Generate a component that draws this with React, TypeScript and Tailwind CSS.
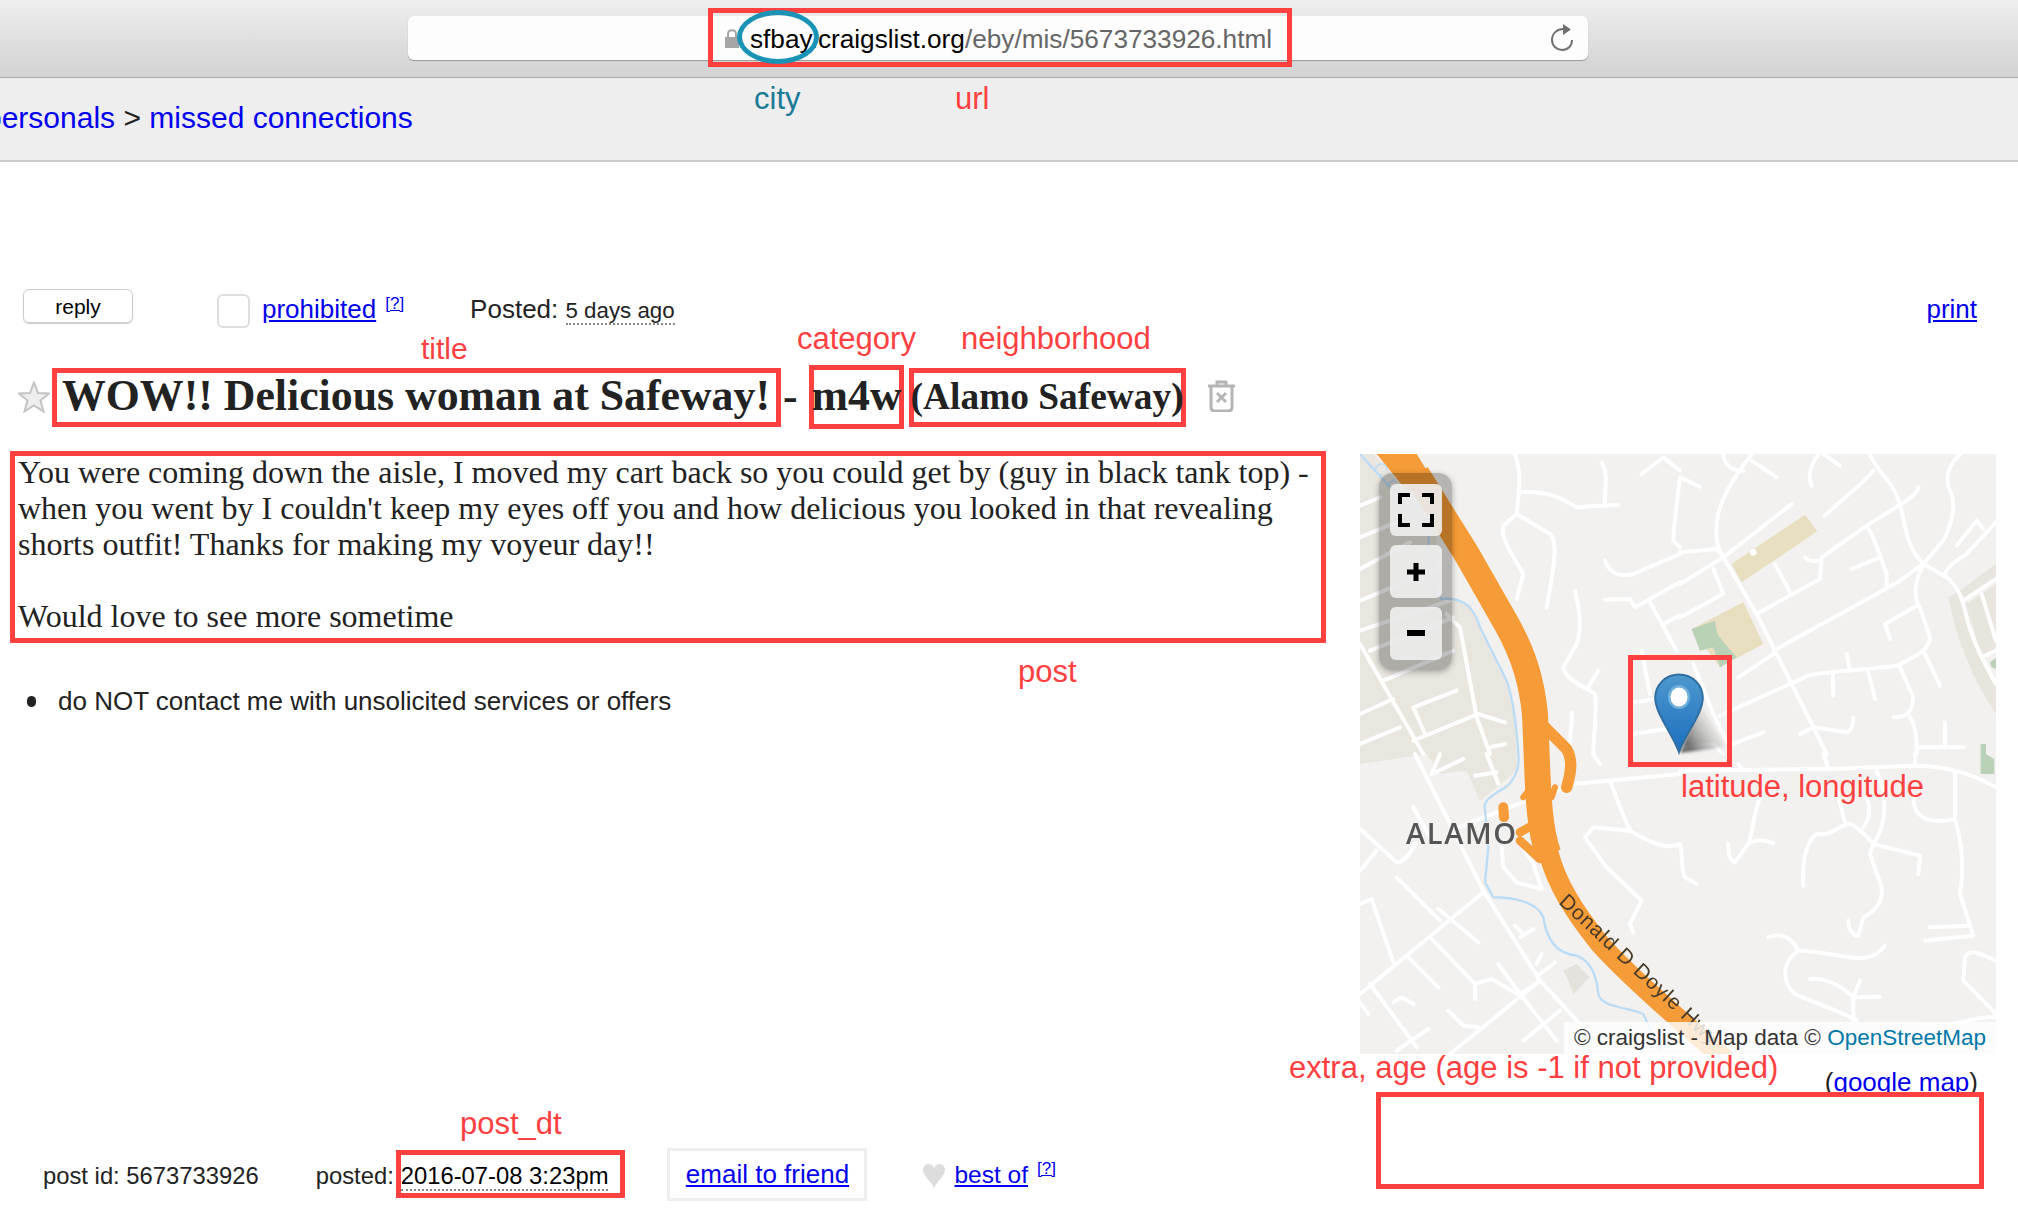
import React from "react";

const q1 = [
  "M465 0 C480 40 480 90 475 130 L470 180 L430 215 C420 250 450 290 490 360 L470 435",
  "M480 115 C560 110 600 130 650 160 L775 152",
  "M725 25 C745 60 735 100 735 152",
  "M470 180 L570 240 C590 260 590 300 560 460",
  "M645 410 C660 470 665 530 650 570 L610 640 C620 680 660 690 705 720 C712 770 700 850 700 900",
  "M715 650 L685 700",
  "M635 775 C640 810 625 850 630 900",
  "M735 320 C750 360 780 370 820 360 L960 300",
  "M735 437 L810 435 L825 460 L960 385",
  "M870 445 L950 590",
  "M910 510 L960 485",
  "M845 590 L870 720",
  "M820 745 L890 735",
  "M820 840 L920 825",
  "M845 60 L910 10 L960 50",
  "M960 70 C950 150 940 230 940 260 L960 280",
  "M0 155 L60 130",
  "M0 250 L120 200",
  "M0 345 L150 265",
  "M0 440 L240 340",
  "M0 530 L270 440",
  "M30 590 L280 490",
  "M70 680 L280 590",
  "M0 570 L190 900",
  "M0 780 L100 735",
  "M0 870 L120 820",
  "M260 480 L300 520 L350 790 L390 900",
  "M290 710 L160 760 L195 840",
  "M160 860 L355 780 L435 805",
  "M390 880 L435 870",
];

const q2 = [
  "M215 0 C170 60 110 140 110 220 C105 270 120 290 130 310",
  "M130 0 C135 40 160 50 190 50",
  "M215 20 L290 70",
  "M395 95 C380 60 395 30 415 0",
  "M430 0 L480 35",
  "M570 0 C580 40 640 80 660 150 C680 230 680 280 730 330 L800 370 C830 390 850 440 860 490 C880 570 920 640 948 690",
  "M580 50 C550 90 480 140 435 185",
  "M335 150 L130 310 L0 390",
  "M0 295 L110 285 L130 310 L230 480 L440 900",
  "M715 100 C710 130 660 150 560 215 L425 310 L420 375 L230 480",
  "M375 310 C390 325 405 320 425 320",
  "M560 215 C590 260 600 310 620 360 L620 395",
  "M515 345 L600 310",
  "M285 330 L330 415",
  "M100 345 L130 420 L0 490",
  "M280 590 L580 425 L660 380 L730 330 L790 260 C820 200 830 150 810 110 C790 70 810 30 840 0",
  "M175 670 L280 600",
  "M730 330 C700 390 700 430 720 460 L750 550 C750 590 700 610 650 635 C550 650 450 650 385 665 L330 690 L120 785",
  "M710 455 L615 510 L630 555",
  "M500 600 L510 650",
  "M458 660 L460 725",
  "M565 655 L585 735",
  "M660 640 L700 730 C695 770 690 790 640 790",
  "M690 790 C710 820 710 860 710 900",
  "M735 600 L780 695",
  "M360 840 L400 820 L500 835 C520 830 520 800 520 790",
  "M160 870 L250 835",
  "M710 880 L850 880",
  "M795 805 L795 880",
  "M790 365 C810 330 830 320 860 300 L948 205",
  "M830 275 L890 200 L910 225",
  "M850 440 L948 375",
  "M905 420 L948 560",
  "M905 610 L948 590",
  "M40 630 L100 780 L150 880",
  "M0 880 L100 870 L130 900",
  "M0 70 L60 98",
];

const q3 = [
  "M165 0 L370 410 L540 680 L660 810",
  "M270 230 L500 140 L640 90 L960 60",
  "M240 0 L215 60 L310 15",
  "M380 0 L415 90",
  "M345 65 L410 55",
  "M0 225 L110 325 C130 325 150 300 165 270",
  "M0 350 L50 290",
  "M160 160 L210 250",
  "M110 370 L240 500",
  "M235 465 L355 565",
  "M370 415 L0 720",
  "M0 450 L35 435 L100 625",
  "M145 610 L235 700",
  "M215 555 L345 690 L345 735",
  "M345 690 L395 675 L480 725",
  "M415 630 L480 720 L540 680",
  "M30 690 L170 880",
  "M100 745 L125 730 L160 750",
  "M0 745 L25 780",
  "M540 680 L270 900",
  "M265 770 L310 815 L355 820",
  "M110 890 L205 825",
  "M480 720 L590 860",
  "M600 770 L490 860",
  "M480 550 L520 525",
  "M465 515 L485 535",
  "M530 630 L545 600",
  "M540 660 L585 625",
  "M425 280 L430 340 L470 385 L545 405 L520 330 L490 280",
  "M750 80 L780 160 L810 230 L700 220 L675 250 L740 340 L845 440 L810 510 L820 535",
  "M810 230 C860 260 920 290 960 270",
  "M700 0 L720 30",
];

const q4 = [
  "M175 30 L190 50",
  "M430 0 L445 45",
  "M0 50 L450 45 L700 35 C800 35 880 60 948 100",
  "M705 0 L705 35",
  "M240 130 C220 180 220 230 205 270 L165 325 C145 320 145 290 145 270",
  "M205 270 C225 255 250 255 280 268",
  "M0 270 C10 300 0 340 15 370 L50 390",
  "M470 110 L495 205",
  "M370 395 C365 320 380 260 410 240 C450 250 480 210 510 210 C540 220 560 250 580 270 L720 305 L715 360",
  "M590 50 C625 130 620 210 580 270",
  "M580 270 L570 300 L605 400 C610 440 590 470 550 490 L535 545 C515 545 505 520 505 500",
  "M560 130 C575 170 565 200 550 220",
  "M700 130 C700 200 760 210 825 195",
  "M825 60 L825 195 C850 280 850 360 840 420 L880 545 L735 560",
  "M750 520 L870 515",
  "M265 550 C310 530 340 560 355 590 C420 590 480 610 540 612 C590 610 600 590 615 575",
  "M355 590 C310 620 300 680 345 720 C410 750 480 770 530 800",
  "M390 675 C440 670 490 700 520 730 L540 680",
  "M520 730 L600 728",
  "M520 730 L520 800",
  "M948 620 C900 600 870 580 855 610 L850 680 L948 780",
  "M730 810 C800 830 900 780 948 790",
];

function RoadGroup({ paths, x, y }: { paths: string[]; x: number; y: number }) {
  return (
    <g transform={`translate(${x} ${y}) scale(0.3333)`} fill="none" stroke="#ffffff" strokeWidth={12} strokeLinecap="round" strokeLinejoin="round">
      {paths.map((d) => (
        <path key={d} d={d} />
      ))}
    </g>
  );
}

function MapDrawing() {
  return (
    <svg viewBox="0 0 636 600" className="absolute inset-0 h-full w-full blur-[0.6px]">
      <rect width="636" height="600" fill="#f2f1ef" />
      <g transform="scale(0.3333)">
        <path d="M40 0 L130 100 L230 240 L230 430 L330 450 L440 680 L470 830 L470 950 L360 1040 L320 950 L240 960 L200 900 L0 930 L0 0 Z" fill="#e9e6df" />
        <g transform="translate(960 0)">
          <path d="M155 330 L375 182 L412 232 L185 385 Z" fill="#e8dfc0" />
          <path d="M35 525 L190 445 L250 570 L120 640 Z" fill="#e8dfc0" />
          <path d="M35 525 L105 500 L112 540 L135 570 L170 610 L120 640 L100 580 L60 590 Z" fill="#b9d1b6" />
          <circle cx="220" cy="295" r="10" fill="#ffffff" />
          <path d="M860 450 L948 390 L948 590 L905 610 Z" fill="#e7e5de" />
          <path d="M805 430 L840 410 L948 330 L948 370 L860 430 C870 520 900 620 948 700 L948 780 C880 680 830 560 805 430 Z" fill="#e7e5de" />
          <path d="M930 625 L948 612 L948 645 L935 640 Z" fill="#b9d1b6" />
        </g>
        <path d="M1862 870 L1878 870 L1878 900 L1903 915 L1903 960 L1862 960 Z" fill="#b9d1b6" />
        <path d="M610 1550 L650 1530 L690 1570 L640 1620 L625 1580 Z" fill="#e3e2dd" />
      </g>

      <RoadGroup paths={q1} x={0} y={0} />
      <RoadGroup paths={q2} x={320} y={0} />
      <RoadGroup paths={q3} x={0} y={300} />
      <RoadGroup paths={q4} x={320} y={300} />

      <g transform="scale(0.3333)" fill="none" strokeLinecap="round" strokeLinejoin="round">
        <path d="M0 0 L100 110 L205 235 L210 400 L245 435 C300 430 340 450 360 520 L440 680 C460 740 470 820 475 900 C480 950 460 990 420 1010 C390 1030 370 1040 375 1065 L385 1180 L375 1285 L400 1330 C450 1330 530 1340 550 1390 C560 1460 590 1500 650 1505 C690 1520 710 1560 715 1620 C720 1660 810 1660 850 1680 L900 1790" stroke="#bcdcf5" strokeWidth={7} />
        <path d="M50 0 L170 0 L250 130 L140 110 Z" fill="#f59b37" stroke="none" />
        <path d="M170 60 L320 300 L440 510 C490 600 515 680 525 780 L530 900 C535 1040 540 1130 565 1200" stroke="#f59b37" strokeWidth={78} strokeLinecap="butt" />
        <path d="M565 1195 C590 1290 640 1370 720 1470 C800 1560 950 1690 1100 1820" stroke="#f59b37" strokeWidth={60} strokeLinecap="butt" />
        <path d="M555 820 L620 885 C640 920 632 960 620 1000" stroke="#f59b37" strokeWidth={34} />
        <path d="M592 910 L592 985" stroke="#f2f1ef" strokeWidth={22} />
        <path d="M430 1060 L432 1090" stroke="#f59b37" strokeWidth={30} />
        <path d="M480 1135 L525 1110" stroke="#f59b37" strokeWidth={26} />
        <path d="M480 1160 L540 1215" stroke="#f59b37" strokeWidth={26} />
        <path d="M490 1030 L505 1010" stroke="#f59b37" strokeWidth={18} />
        <path d="M575 1030 L585 1000" stroke="#f59b37" strokeWidth={18} />
      </g>

      <text x="46" y="390" fontFamily="'Open Sans', sans-serif" fontSize="29" fontWeight="600" letterSpacing="1.6" fill="#555555" stroke="#f2f1ef" strokeWidth="2" paintOrder="stroke">ALAMO</text>
      <text x="198" y="449" transform="rotate(43 198 449)" fontFamily="'Liberation Sans', sans-serif" fontSize="21" letterSpacing="0.9" fill="#473a28">Donald D Doyle Hwy</text>
      <text x="12" y="14" transform="rotate(50 12 14)" fontFamily="'Liberation Sans', sans-serif" fontSize="18" letterSpacing="8" fill="#bcdcf5">Creek</text>
    </svg>
  );
}

function MapPin() {
  return (
    <svg viewBox="0 0 84 84" className="absolute left-[294px] top-[219px] h-[84px] w-[84px]">
      <defs>
        <linearGradient id="pinFill" x1="0" y1="0" x2="0" y2="1">
          <stop offset="0" stopColor="#4d98cd" />
          <stop offset="1" stopColor="#1c6fc0" />
        </linearGradient>
        <linearGradient id="pinShadow" x1="0.2" y1="0.85" x2="0.95" y2="0.35">
          <stop offset="0" stopColor="#444444" stopOpacity="0.75" />
          <stop offset="0.75" stopColor="#999999" stopOpacity="0.12" />
          <stop offset="1" stopColor="#999999" stopOpacity="0" />
        </linearGradient>
        <filter id="pinBlur">
          <feGaussianBlur stdDeviation="1.5" />
        </filter>
      </defs>
      <path d="M46 30 L72 74 L26 80 Z" fill="url(#pinShadow)" filter="url(#pinBlur)" />
      <path d="M25 1.5 C11.5 1.5 1.2 12 1.2 25 C1.2 40 18 60 25 79 C32 60 48.8 40 48.8 25 C48.8 12 38.5 1.5 25 1.5 Z" fill="url(#pinFill)" stroke="#2f6e9f" strokeWidth="2" />
      <ellipse cx="25" cy="24" rx="11" ry="12" fill="#6fb0db" />
      <ellipse cx="25" cy="24" rx="8.5" ry="9.5" fill="#ffffff" />
    </svg>
  );
}

function MapControls() {
  return (
    <div className="absolute left-[19px] top-[19px] flex h-[197px] w-[73px] flex-col gap-[9px] rounded-[14px] bg-black/25 px-[10.5px] py-[10.5px] shadow-[0_2px_6px_rgba(0,0,0,0.3)]">
      <div className="flex h-[53px] w-[52px] items-center justify-center rounded-md bg-[#f0f0f0]/90">
        <svg viewBox="0 0 36 34" className="h-[34px] w-[36px]" fill="none" stroke="#000000" strokeWidth="4">
          <path d="M2 11 V2 H12" />
          <path d="M24 2 H34 V11" />
          <path d="M2 21 V32 H12" />
          <path d="M24 32 H34 V21" />
        </svg>
      </div>
      <div className="flex h-[53px] w-[52px] items-center justify-center rounded-md bg-[#f0f0f0]/90">
        <svg viewBox="0 0 18 18" className="h-[18px] w-[18px]" fill="#000000">
          <path d="M6.5 0 H11.5 V6.5 H18 V11.5 H11.5 V18 H6.5 V11.5 H0 V6.5 H6.5 Z" />
        </svg>
      </div>
      <div className="flex h-[53px] w-[52px] items-center justify-center rounded-md bg-[#f0f0f0]/90">
        <div className="h-[6px] w-[18px] bg-black" />
      </div>
    </div>
  );
}

export default function App() {
  return (
    <div className="relative h-[1208px] w-[2018px] overflow-hidden bg-white font-['Liberation_Sans',Arial,sans-serif] text-[#222222]">
      {/* Browser toolbar */}
      <div className="h-[78px] border-b border-[#a9a9a9] bg-gradient-to-b from-[#eeeeee] to-[#d2d2d2] pl-[408px] pt-[16px]">
        <div className="flex h-[44px] w-[1180px] items-center rounded-md bg-[#fdfdfd] pl-[316px] shadow-[0_1px_1px_rgba(0,0,0,0.3)]">
          <svg viewBox="0 0 16 20" className="mr-[10px] h-[20px] w-[16px]" fill="#a5a5a5">
            <path d="M1 9 H15 V20 H1 Z" />
            <path d="M4 9 V6 C4 1 12 1 12 6 V9" fill="none" stroke="#a5a5a5" strokeWidth="2" />
          </svg>
          <div className="mt-[2px] whitespace-nowrap text-[26.2px] leading-none text-[#666666]">
            <span className="text-black">sfbay.craigslist.org</span>/eby/mis/5673733926.html
          </div>
          <svg viewBox="0 0 24 28" className="ml-auto mr-[14px] h-[28px] w-[24px]" fill="none" stroke="#707070" strokeWidth="2">
            <path d="M15 5 C7 4 2 10 2 16 C2 22 7 26 12 26 C18 26 22 22 22 16" />
            <path d="M13 0 L21 5.5 L13 11 Z" fill="#707070" stroke="none" />
          </svg>
        </div>
      </div>

      {/* Site breadcrumb */}
      <div className="flex h-[84px] items-start overflow-hidden border-b-2 border-[#cccccc] bg-[#eeeeee] pt-[20px]">
        <div className="-ml-[15px] whitespace-nowrap text-[30px] leading-[40px]">
          <span className="text-[#0000ee]">personals</span> <span>&gt;</span> <span className="text-[#0000ee]">missed connections</span>
        </div>
      </div>

      {/* Post action row */}
      <div className="mt-[127px] flex h-[40px] items-start">
        <div className="ml-[23px] flex h-[34px] w-[110px] items-center justify-center rounded-md border border-[#cccccc] pt-[2px] text-[21px] text-black shadow-[0_1px_1px_rgba(0,0,0,0.2)]">reply</div>
        <div className="ml-[84px] mt-[5px] h-[34px] w-[33px] rounded-md border-2 border-[#dddddd]" />
        <div className="ml-[12px] mt-[1px] text-[26px] leading-[38px] text-[#0000ee] underline">prohibited</div>
        <sup className="ml-[9px] mt-[14px] text-[17px] leading-none text-[#0000ee] underline">[?]</sup>
        <div className="ml-[66px] mt-[1px] whitespace-nowrap text-[26px] leading-[38px]">
          Posted: <span className="border-b-2 border-dotted border-[#888888] text-[22.3px]">5 days ago</span>
        </div>
        <div className="ml-auto mr-[41px] mt-[1px] text-[26px] leading-[38px] text-[#0000ee] underline">print</div>
      </div>

      {/* Title */}
      <div className="mt-[36px] flex h-[64px] items-center whitespace-nowrap font-['Liberation_Serif','Times_New_Roman',serif] font-bold">
        <svg viewBox="0 0 32 32" className="ml-[18px] h-[32px] w-[32px]" fill="#eeeeee" stroke="#c4c4c4" strokeWidth="2">
          <path d="M16 1.5 L20 12 L31 12.5 L22.5 19.5 L25.5 30.5 L16 24.5 L6.5 30.5 L9.5 19.5 L1 12.5 L12 12 Z" />
        </svg>
        <div className="ml-[2px] flex h-[59px] w-[729px] items-center border-[5px] border-[#ff4040] pb-[2px] pl-[5px] text-[43.8px] leading-none">WOW!! Delicious woman at Safeway!</div>
        <div className="ml-[2px] text-[43.8px] leading-none">-</div>
        <div className="ml-[11px] flex h-[64px] w-[95px] items-center border-[5px] border-[#ff4040] pb-[2px] text-[43.8px] leading-none">
          <span className="-ml-[2px]">m4w</span>
        </div>
        <div className="ml-[5px] flex h-[59px] w-[277px] items-center border-[5px] border-[#ff4040] text-[37.4px] leading-none">
          <span className="-ml-[3px]">(Alamo Safeway)</span>
        </div>
        <svg viewBox="0 0 29 32" className="mb-[2px] ml-[21px] h-[32px] w-[29px]" fill="none" stroke="#b5b5b5" strokeWidth="3">
          <path d="M1 6 H28" />
          <path d="M10 5 V2 H19 V5" />
          <path d="M4 6 V27 C4 30 6 31 8 31 H21 C23 31 25 30 25 27 V6" />
          <path d="M10 13 L19 22 M19 13 L10 22" />
        </svg>
      </div>

      {/* Body */}
      <div className="mt-[22px] flex h-[697px] items-start">
        <div className="w-[1360px] pl-[10px]">
          <div className="h-[192px] w-[1316px] whitespace-nowrap border-[5px] border-[#ff4040] pl-[3px] font-['Liberation_Serif','Times_New_Roman',serif] text-[32px] leading-[36px]">
            <div className="-mt-[2px]">
              You were coming down the aisle, I moved my cart back so you could get by (guy in black tank top) -<br />
              when you went by I couldn't keep my eyes off you and how delicious you looked in that revealing<br />
              shorts outfit! Thanks for making my voyeur day!!<br />
              <br />
              Would love to see more sometime
            </div>
          </div>
          <div className="mt-[40px] flex h-[36px] items-center text-[26px] leading-[36px]">
            <div className="ml-[17px] h-[11px] w-[9px] rounded-full bg-[#222222]" />
            <div className="ml-[22px]">do NOT contact me with unsolicited services or offers</div>
          </div>
        </div>
        <div className="mt-[3px] w-[636px]">
          <div className="relative h-[600px] w-[636px] overflow-hidden">
            <MapDrawing />
            <MapControls />
            <MapPin />
            <div className="absolute bottom-0 right-0 flex h-[32px] w-[432px] items-center justify-end whitespace-nowrap bg-white/80 pr-[10px] text-[22.5px] text-[#333333]">
              © craigslist - Map data ©&nbsp;<span className="text-[#0078a8]">OpenStreetMap</span>
            </div>
          </div>
          <div className="mr-[18px] mt-[10px] text-right text-[26px] leading-[36px]">
            (<span className="text-[#0000ee] underline">google map</span>)
          </div>
        </div>
      </div>

      {/* Footer */}
      <div className="flex h-[53px] items-center whitespace-nowrap text-[23.8px]">
        <div className="ml-[43px] mt-[2px]">post id: 5673733926</div>
        <div className="ml-[57px] mt-[2px]">posted:</div>
        <div className="ml-[7px] mt-[2px] text-black">
          <span className="border-b-2 border-dotted border-[#888888]">2016-07-08 3:23pm</span>
        </div>
        <div className="ml-[59px] flex h-[53px] w-[200px] items-center justify-center border-[3px] border-[#eeeeee] text-[26px] text-[#0000ee] underline">email to friend</div>
        <svg viewBox="0 0 22 24" className="ml-[56px] mt-[2px] h-[24px] w-[22px]" fill="#dddddd">
          <path d="M11 24 C8 17 0 12 0 6 C0 2 3 0 5.5 0 C8 0 10 1.5 11 4 C12 1.5 14 0 16.5 0 C19 0 22 2 22 6 C22 12 14 17 11 24 Z" />
        </svg>
        <div className="ml-[9px] mt-[2px] text-[24.5px] text-[#0000ee] underline">best of</div>
        <sup className="ml-[9px] mt-[5px] text-[17px] leading-none text-[#0000ee] underline">[?]</sup>
      </div>

      {/* Annotations laid over the screenshot */}
      <div className="pointer-events-none absolute left-[708px] top-[8px] h-[59px] w-[584px] border-[5px] border-[#ff4040]" />
      <div className="pointer-events-none absolute left-[737px] top-[10px] h-[54px] w-[82px] rounded-[50%] border-[5px] border-[#1b93b4]" />
      <div className="absolute left-[754px] top-[79px] text-[31px] leading-[40px] text-[#1b7a96]">city</div>
      <div className="absolute left-[955px] top-[79px] text-[31px] leading-[40px] text-[#ff4040]">url</div>
      <div className="absolute left-[421px] top-[330px] text-[30px] leading-[38px] text-[#ff4040]">title</div>
      <div className="absolute left-[797px] top-[320px] text-[31px] leading-[38px] text-[#ff4040]">category</div>
      <div className="absolute left-[961px] top-[320px] text-[31px] leading-[38px] text-[#ff4040]">neighborhood</div>
      <div className="absolute left-[1018px] top-[653px] text-[31px] leading-[38px] text-[#ff4040]">post</div>
      <div className="pointer-events-none absolute left-[1628px] top-[655px] h-[112px] w-[104px] border-[5px] border-[#ff4040]" />
      <div className="absolute left-[1681px] top-[768px] text-[31px] leading-[38px] text-[#ff4040]">latitude, longitude</div>
      <div className="absolute left-[1289px] top-[1049px] whitespace-nowrap text-[31px] leading-[38px] text-[#ff4040]">extra, age (age is -1 if not provided)</div>
      <div className="absolute left-[1376px] top-[1092px] h-[97px] w-[608px] border-[5px] border-[#ff4040] bg-white" />
      <div className="absolute left-[460px] top-[1105px] text-[31px] leading-[38px] text-[#ff4040]">post_dt</div>
      <div className="pointer-events-none absolute left-[396px] top-[1150px] h-[48px] w-[229px] border-[5px] border-[#ff4040]" />
    </div>
  );
}
